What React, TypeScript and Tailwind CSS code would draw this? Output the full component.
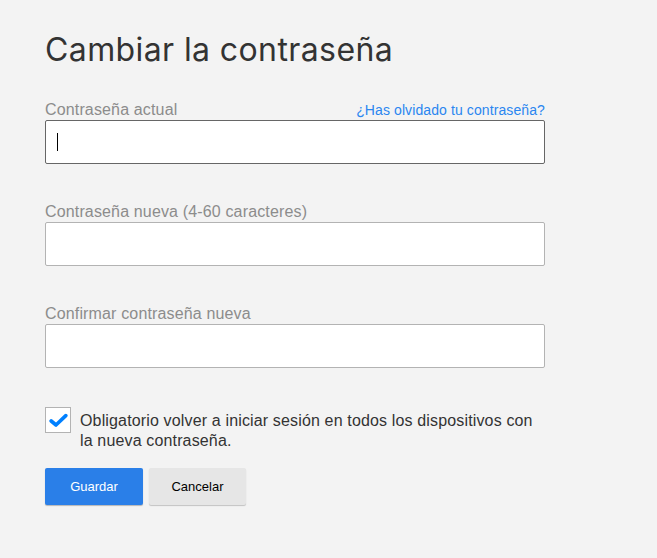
import React from "react";

export default function App() {
  return (
    <div className="min-h-[558px] w-full bg-[#f3f3f3] text-[#333]" style={{ fontFamily: '"Liberation Sans", Arial, sans-serif' }}>
      <div className="pl-[45px] pt-[28px] w-[545px]">
        <h1 className="text-[32px] leading-[44px] text-[#333] font-normal tracking-[0.4px] font-['Inter',_sans-serif]">Cambiar la contraseña</h1>
        <div className="mt-[28px]">
          <div className="flex items-end justify-between h-[20px]">
            <span className="text-[16px] leading-[20px] text-[#8c8c8c] tracking-[0.15px]">Contraseña actual</span>
            <a className="text-[14px] leading-[20px] text-[#2a86f0] tracking-[0.1px] cursor-pointer">¿Has olvidado tu contraseña?</a>
          </div>
          <div className="h-[44px] bg-white border border-[#666] rounded-[2px] flex items-center pl-[10px]">
            <div className="w-px h-[18px] bg-black ml-[1px]" />
          </div>
        </div>
        <div className="mt-[38px]">
          <div className="text-[16px] leading-[20px] text-[#8c8c8c] tracking-[0.15px]">Contraseña nueva (4-60 caracteres)</div>
          <div className="h-[44px] bg-white border border-[#b3b3b3] rounded-[2px]" />
        </div>
        <div className="mt-[38px]">
          <div className="text-[16px] leading-[20px] text-[#8c8c8c] tracking-[0.15px]">Confirmar contraseña nueva</div>
          <div className="h-[44px] bg-white border border-[#b3b3b3] rounded-[2px]" />
        </div>
        <div className="mt-[39px] flex items-start gap-[9px]">
          <div className="w-[26px] h-[26px] shrink-0 bg-white border border-[#b3b3b3] flex items-center justify-center">
            <svg width="19" height="15" viewBox="0 0 19 15">
              <path d="M2.2 8 L7 12 L16.8 2.6" fill="none" stroke="#0080ff" strokeWidth="3.6" strokeLinecap="round" strokeLinejoin="round" />
            </svg>
          </div>
          <p className="text-[16px] leading-[20px] text-[#333] tracking-[0.15px] pt-[4px] w-[465px]">
            Obligatorio volver a iniciar sesión en todos los dispositivos con la nueva contraseña.
          </p>
        </div>
        <div className="mt-[17px] flex gap-[6px]">
          <button className="w-[98px] h-[37px] bg-[#2a7fe8] text-white text-[13px] rounded-[2px] shadow-[0_1px_1px_rgba(0,0,0,0.25)]">Guardar</button>
          <button className="w-[97px] h-[37px] bg-[#e6e6e6] text-black text-[13px] rounded-[2px] shadow-[0_1px_1px_rgba(0,0,0,0.2)]">Cancelar</button>
        </div>
      </div>
    </div>
  );
}
